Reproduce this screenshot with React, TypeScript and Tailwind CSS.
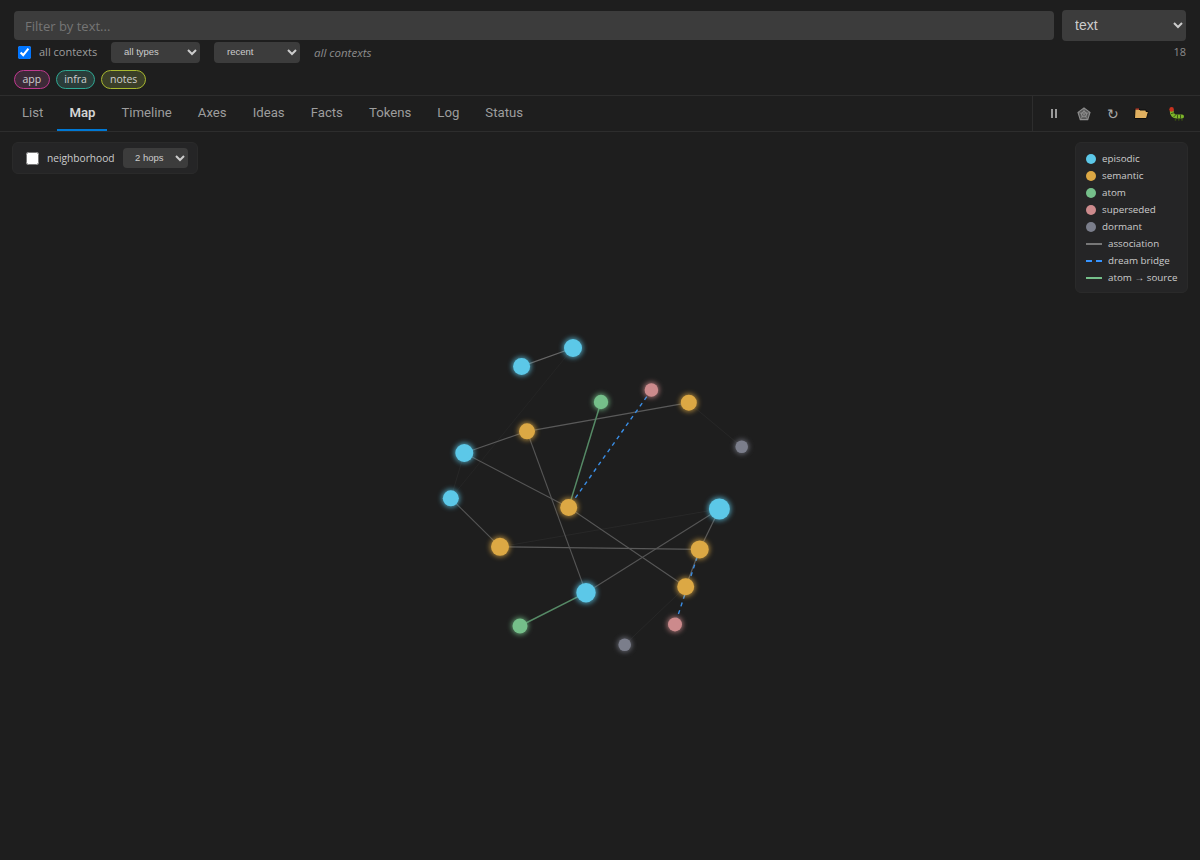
const TABS = ["List", "Map", "Timeline", "Axes", "Ideas", "Facts", "Tokens", "Log", "Status"];

const COLORS: Record<string, string> = {
  episodic: "#5cc8e8",
  semantic: "#dca844",
  atom: "#75bf8a",
  superseded: "#cc8a8c",
  dormant: "#7b7e8b",
};

const NODES: [number, number, number, string][] = [
  [573, 348, 9, "episodic"],
  [521.6, 366.4, 8.5, "episodic"],
  [464.3, 453, 9, "episodic"],
  [450.8, 498.3, 8, "episodic"],
  [719.4, 509, 10.5, "episodic"],
  [586, 592.7, 9.7, "episodic"],
  [527, 431.3, 8, "semantic"],
  [688.8, 402.7, 8, "semantic"],
  [568.7, 507.4, 8.5, "semantic"],
  [500, 546.8, 9, "semantic"],
  [699.7, 549.4, 9, "semantic"],
  [685.7, 586.8, 8.5, "semantic"],
  [601, 402, 7.2, "atom"],
  [520, 626, 7.5, "atom"],
  [651.4, 390, 6.8, "superseded"],
  [675, 624.4, 7, "superseded"],
  [741.7, 446.8, 6.3, "dormant"],
  [624.7, 644.8, 6.3, "dormant"],
];

// x1 y1 x2 y2 stroke width
const EDGES: [number, number, number, number, string, number][] = [
  [573, 348, 450.8, 498.3, "#252525", 1],
  [464.3, 453, 450.8, 498.3, "#272727", 1],
  [688.8, 402.7, 741.7, 446.8, "#272727", 1],
  [500, 546.8, 719.4, 509, "#282828", 1],
  [685.7, 586.8, 624.7, 644.8, "#272727", 1],
  [573, 348, 521.6, 366.4, "#666666", 1.3],
  [464.3, 453, 527, 431.3, "#5a5a5a", 1.2],
  [527, 431.3, 688.8, 402.7, "#5a5a5a", 1.2],
  [464.3, 453, 568.7, 507.4, "#555555", 1.1],
  [527, 431.3, 586, 592.7, "#555555", 1.1],
  [450.8, 498.3, 500, 546.8, "#555555", 1.1],
  [568.7, 507.4, 685.7, 586.8, "#575757", 1.1],
  [500, 546.8, 699.7, 549.4, "#5a5a5a", 1.3],
  [586, 592.7, 719.4, 509, "#555555", 1.1],
  [719.4, 509, 699.7, 549.4, "#5a5a5a", 1.2],
  [699.7, 549.4, 685.7, 586.8, "#5a5a5a", 1.2],
  [601, 402, 568.7, 507.4, "#568a66", 1.5],
  [520, 626, 586, 592.7, "#568a66", 1.5],
];

const DREAMS: [number, number, number, number][] = [
  [651.4, 390, 568.7, 507.4],
  [699.7, 549.4, 675, 624.4],
];

function NodeMap() {
  return (
    <svg className="absolute inset-0" width="1200" height="728" viewBox="0 132 1200 728">
      <defs>
        <filter id="glow" x="-100%" y="-100%" width="300%" height="300%">
          <feGaussianBlur stdDeviation="2.8" />
        </filter>
      </defs>
      {EDGES.map((e, i) => (
        <line key={i} x1={e[0]} y1={e[1]} x2={e[2]} y2={e[3]} stroke={e[4]} strokeWidth={e[5]} />
      ))}
      {DREAMS.map((e, i) => (
        <line key={i} x1={e[0]} y1={e[1]} x2={e[2]} y2={e[3]} stroke="#3a8ee6" strokeWidth="1.4" strokeDasharray="4 4" />
      ))}
      {NODES.map((n, i) => (
        <g key={i}>
          <circle cx={n[0]} cy={n[1]} r={n[2] + 1.2} fill={COLORS[n[3]]} opacity="0.7" filter="url(#glow)" />
          <circle cx={n[0]} cy={n[1]} r={n[2]} fill={COLORS[n[3]]} />
        </g>
      ))}
    </svg>
  );
}

function Legend() {
  const dots = ["episodic", "semantic", "atom", "superseded", "dormant"];
  return (
    <div className="absolute top-[10px] right-[12px] w-[113px] h-[151px] rounded-md border border-[#2a2a2a] bg-[#252526] pl-[10px] pt-[7px] text-[9.8px] text-[#cccccc]">
      {dots.map((d) => (
        <div key={d} className="flex h-[17px] items-center gap-[6px]">
          <span className="h-[10px] w-[10px] rounded-full" style={{ background: COLORS[d] }} />
          <span className="pt-px">{d}</span>
        </div>
      ))}
      <div className="flex h-[17px] items-center gap-[6px]">
        <span className="h-[2px] w-[16px] bg-[#777777]" />
        <span className="pt-px">association</span>
      </div>
      <div className="flex h-[17px] items-center gap-[6px]">
        <svg width="16" height="2"><line x1="0" y1="1" x2="16" y2="1" stroke="#3794ff" strokeWidth="2" strokeDasharray="6 4" /></svg>
        <span className="pt-px">dream bridge</span>
      </div>
      <div className="flex h-[17px] items-center gap-[6px]">
        <span className="h-[2px] w-[16px] bg-[#75bf8a]" />
        <span className="pt-px">atom <span className="font-['Liberation_Sans',sans-serif]">→</span> source</span>
      </div>
    </div>
  );
}

function WebIcon() {
  return (
    <svg width="14" height="14" viewBox="0 0 14 14" fill="none" stroke="#8e8e8e" strokeWidth="1.1">
      <path d="M7 1 13 5.4 10.7 12.6H3.3L1 5.4Z" fill="#555555" />
      <path d="M7 4.2 9.8 6.4 8.7 9.8H5.3L4.2 6.4Z" />
      <path d="M7 1V7M13 5.4 7 7M10.7 12.6 7 7M3.3 12.6 7 7M1 5.4 7 7" strokeWidth="0.7" />
    </svg>
  );
}

function FolderIcon() {
  return (
    <svg width="15" height="11" viewBox="0 0 15 11">
      <path d="M1 1H5L6 2H12V3.5H14.5L12.5 10.5H0.5Z" fill="#e0b060" stroke="#0c0c0c" strokeWidth="1" />
      <path d="M1.5 0.5H5V1.5H1.5Z" fill="#d8392b" />
    </svg>
  );
}

function BugIcon() {
  return (
    <svg width="16" height="14" viewBox="0 0 16 14">
      <path d="M3.8 4.5C3.8 8 6 9.6 8.5 9.6H14" fill="none" stroke="#7db52a" strokeWidth="4" strokeLinecap="round" />
      <path d="M3 6.6 6 5.8M5.6 10 7.8 7.8M9.5 11.5V7.6M12.5 11.5V7.6" stroke="#2c4010" strokeWidth="0.8" />
      <circle cx="3.6" cy="2.4" r="2.3" fill="#c8321f" />
      <circle cx="7.5" cy="12.8" r="0.9" fill="#3a4f12" />
      <circle cx="10.8" cy="12.8" r="0.9" fill="#3a4f12" />
      <circle cx="14" cy="12.8" r="0.9" fill="#3a4f12" />
    </svg>
  );
}

export default function App() {
  return (
    <div className="flex h-[860px] flex-col overflow-hidden bg-[#1e1e1e] font-['Open_Sans',sans-serif] text-[#cccccc]">
      <div className="h-[96px] border-b border-[#2d2d2d] px-[14px] pt-[10px]">
        <div className="flex items-center gap-2">
          <input
            placeholder="Filter by text..."
            className="h-[29px] flex-1 rounded bg-[#3c3c3c] px-[11px] text-[13px] text-[#cccccc] placeholder:text-[#757575]"
          />
          <select className="h-[31px] w-[124px] rounded bg-[#3c3c3c] px-[9px] pb-[2px] font-['Liberation_Sans',sans-serif] text-[14px] text-[#cccccc]">
            <option>text</option>
          </select>
        </div>
        <div className="flex h-[22px] items-center text-[11px]">
          <input type="checkbox" defaultChecked className="ml-[4px] h-[13px] w-[13px]" />
          <span className="ml-2 w-[58px] whitespace-nowrap pt-px text-[#9d9d9d]">all contexts</span>
          <select className="ml-[14px] h-[21px] w-[89px] rounded bg-[#3c3c3c] px-[9px] pb-[2px] font-['Liberation_Sans',sans-serif] text-[9.5px] text-[#cccccc]">
            <option>all types</option>
          </select>
          <select className="ml-[14px] h-[21px] w-[86px] rounded bg-[#3c3c3c] px-[9px] pb-[2px] font-['Liberation_Sans',sans-serif] text-[9.5px] text-[#cccccc]">
            <option>recent</option>
          </select>
          <span className="ml-[14px] pt-px text-[11.5px] italic text-[#8c8c8c]">all contexts</span>
          <span className="ml-auto pt-px text-[#8c8c8c]">18</span>
        </div>
        <div className="mt-[7px] flex gap-[6px] text-[10.5px] leading-[17px]">
          <span className="rounded-full border border-[#c0398f] bg-[#3d2a38] px-[7.5px] text-[#cfcfcf]">app</span>
          <span className="rounded-full border border-[#2fa893] bg-[#2a3d3a] px-[7.5px] text-[#cfcfcf]">infra</span>
          <span className="rounded-full border border-[#a8b82f] bg-[#3b3f28] px-[7.5px] text-[#cfcfcf]">notes</span>
        </div>
      </div>

      <div className="flex h-[36px] border-b border-[#2d2d2d] pl-[10px]">
        <div className="flex gap-0.5">
          {TABS.map((t) => (
            <button
              key={t}
              className={
                "h-[35px] border-b-2 px-3 font-['Roboto',sans-serif] text-[13.2px] " +
                (t === "Map" ? "border-[#0078d4] font-semibold text-[#d4d4d4]" : "border-transparent text-[#9d9d9d]")
              }
            >
              {t}
            </button>
          ))}
        </div>
        <div className="ml-auto flex w-[168px] items-center border-l border-[#2d2d2d] pl-[16px]">
          <span className="flex w-[10px] justify-center gap-[2px]">
            <span className="h-[9px] w-[2px] bg-[#9a9a9a]" />
            <span className="h-[9px] w-[2px] bg-[#9a9a9a]" />
          </span>
          <span className="ml-[18px]"><WebIcon /></span>
          <span className="ml-[16px] w-[12px] text-[14px] leading-none text-[#a8a8a8]">↻</span>
          <span className="ml-[15px]"><FolderIcon /></span>
          <span className="ml-[19px]"><BugIcon /></span>
        </div>
      </div>

      <div className="relative flex-1">
        <NodeMap />
        <div className="absolute left-[12px] top-[10px] flex h-[32px] w-[186px] items-center rounded-md border border-[#2a2a2a] bg-[#252526] pl-[13px] text-[10.2px] text-[#cccccc]">
          <input type="checkbox" className="h-[13px] w-[13px]" />
          <span className="ml-2 w-[68px] whitespace-nowrap pt-[2px]">neighborhood</span>
          <select className="ml-2 h-[20px] w-[65px] rounded bg-[#3c3c3c] px-[8px] pb-px font-['Liberation_Sans',sans-serif] text-[9.5px] text-[#cccccc]">
            <option>2 hops</option>
          </select>
        </div>
        <Legend />
      </div>
    </div>
  );
}
